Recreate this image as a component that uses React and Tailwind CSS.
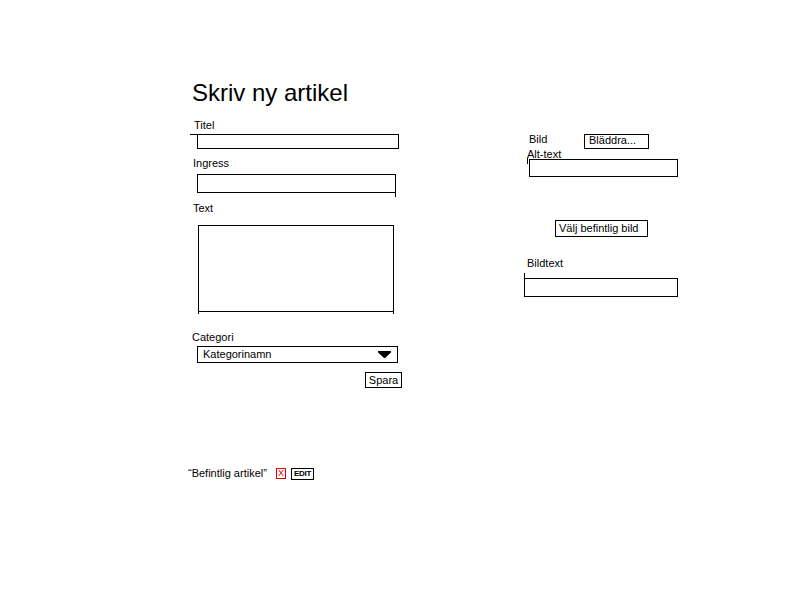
import React from "react";

const font = { fontFamily: '"Liberation Sans", Arial, sans-serif' };

export default function App() {
  return (
    <div className="w-[800px] h-[600px] bg-white text-black flex items-start" style={font}>
      {/* Left column */}
      <div className="ml-[188px] pt-[81px] w-[214px] flex flex-col items-start">
        <h1 className="ml-[4px] text-[24px] leading-[24px] font-normal whitespace-nowrap">Skriv ny artikel</h1>

        <div className="mt-[14px] ml-[6px] text-[11px] leading-[13px]">Titel</div>
        <div className="relative mt-[2px] ml-[9px] w-[202px] h-[15px] border border-black">
          <div className="absolute -left-[8px] -top-[1px] w-[8px] h-[1px] bg-black" />
        </div>

        <div className="mt-[8px] ml-[5px] text-[11px] leading-[13px]">Ingress</div>
        <div className="relative mt-[4px] ml-[9px] w-[199px] h-[19px] border border-black">
          <div className="absolute -right-[1px] -bottom-[5px] w-[1px] h-[5px] bg-black" />
        </div>

        <div className="mt-[9px] ml-[5px] text-[11px] leading-[13px]">Text</div>
        <div className="relative mt-[10px] ml-[10px] w-[196px] h-[87px] border border-black">
          <div className="absolute -left-[1px] -bottom-[3px] w-[1px] h-[3px] bg-black" />
          <div className="absolute -right-[1px] -bottom-[3px] w-[1px] h-[3px] bg-black" />
        </div>

        <div className="mt-[19px] ml-[4px] text-[11px] leading-[13px]">Categori</div>
        <div className="mt-[2px] ml-[9px] w-[201px] h-[17px] border border-black flex items-center justify-between pl-[5px] pr-[6px]">
          <span className="text-[11px] leading-[13px]">Kategorinamn</span>
          <svg width="13" height="7" viewBox="0 0 13 7" className="block">
            <polygon points="0,0 13,0 13,1.5 7,7 6,7 0,1.5" fill="black" />
          </svg>
        </div>

        <div className="mt-[9px] ml-[177px] w-[37px] h-[16px] border border-black flex items-center justify-center text-[11px] leading-[13px]">
          Spara
        </div>

        <div className="mt-[79px] flex items-center h-[13px]">
          <span className="w-[88px] text-[11px] leading-[13px] whitespace-nowrap">{"\u201CBefintlig artikel\u201D"}</span>
          <span className="w-[10px] h-[11px] border border-[#e00000] text-[#e00000] text-[9px] leading-[9px] flex items-center justify-center">X</span>
          <span className="ml-[5px] w-[23px] h-[12px] border border-black text-[8px] font-bold leading-[10px] flex items-center justify-center tracking-[-0.3px]">EDIT</span>
        </div>
      </div>

      {/* Right column */}
      <div className="ml-[122px] pt-[133px] w-[160px] flex flex-col items-start">
        <div className="flex items-start h-[15px]">
          <span className="ml-[5px] mt-[0px] w-[55px] text-[11px] leading-[13px]">Bild</span>
          <span className="mt-[1px] w-[65px] h-[15px] border border-black pl-[4px] text-[11px] leading-[11px] whitespace-nowrap">Bläddra...</span>
        </div>
        <div className="ml-[3px] h-[11px] text-[11px] leading-[13px]">Alt-text</div>
        <div className="relative ml-[5px] w-[149px] h-[18px] border border-black">
          <div className="absolute -left-[3px] -top-[2px] w-[1px] h-[6px] bg-black" />
        </div>

        <div className="mt-[43px] ml-[31px] w-[93px] h-[17px] border border-black pl-[3px] text-[11px] leading-[15px] whitespace-nowrap">
          Välj befintlig bild
        </div>

        <div className="mt-[20px] ml-[3px] text-[11px] leading-[13px]">Bildtext</div>
        <div className="relative mt-[8px] w-[154px] h-[19px] border border-black">
          <div className="absolute -left-[1px] -top-[6px] w-[1px] h-[6px] bg-black" />
        </div>
      </div>
    </div>
  );
}
